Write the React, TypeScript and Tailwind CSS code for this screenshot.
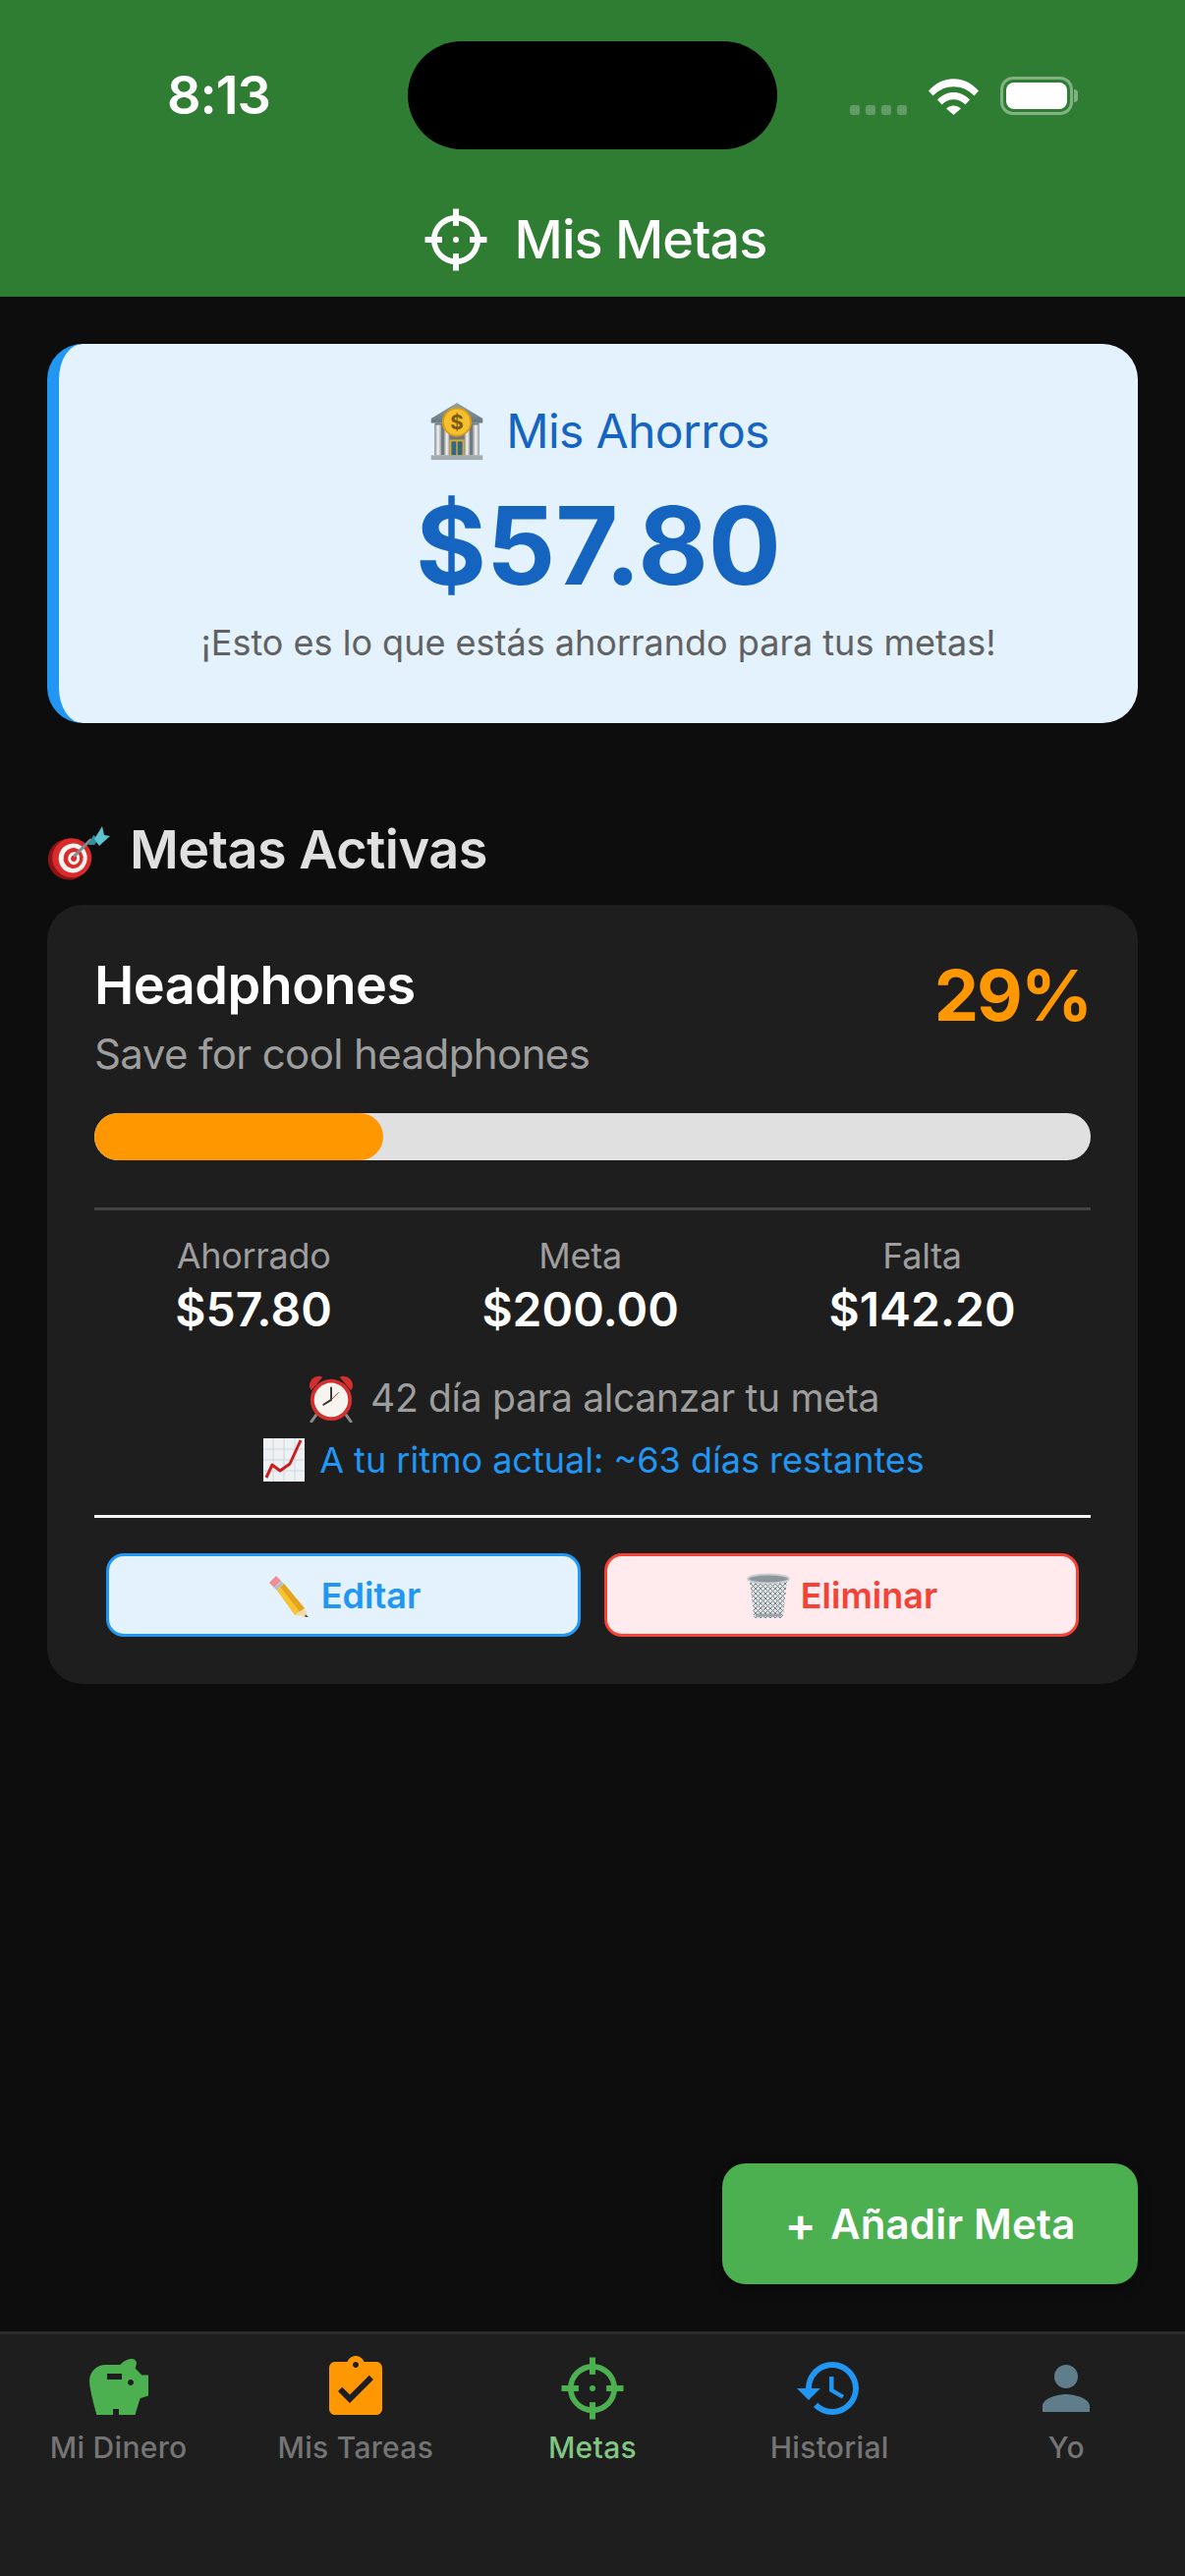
import React from "react";
import { MdSavings, MdAssignmentTurnedIn, MdHistory, MdPerson } from "react-icons/md";

const font = { fontFamily: "Inter, 'Liberation Sans', sans-serif" };

function Crosshair({ className }: { className: string }) {
  return (
    <svg viewBox="0 0 24 24" className={className} fill="currentColor">
      <circle cx="12" cy="12" r="7.4" fill="none" stroke="currentColor" strokeWidth="1.9" />
      <rect x="11" y="1.500" width="2" height="5.800" />
      <rect x="11" y="16.700" width="2" height="5.800" />
      <rect x="1.500" y="11" width="5.800" height="2" />
      <rect x="16.700" y="11" width="5.800" height="2" />
      <circle cx="12" cy="12" r="1" />
    </svg>
  );
}

function Bank() {
  return (
    <svg viewBox="0 0 64 64" className="w-[60px] h-[60px] shrink-0">
      <defs>
        <linearGradient id="roof" x1="0" y1="0" x2="0" y2="1"><stop offset="0" stopColor="#8fa3a8" /><stop offset="1" stopColor="#66787d" /></linearGradient>
        <linearGradient id="col" x1="0" y1="0" x2="1" y2="0"><stop offset="0" stopColor="#8d9396" /><stop offset=".5" stopColor="#f5f5f5" /><stop offset="1" stopColor="#9aa0a3" /></linearGradient>
      </defs>
      <path d="M32 1 60 18v5H4v-5z" fill="url(#roof)" />
      <rect x="8" y="23" width="48" height="35" fill="#6e7a80" />
      <rect x="8" y="25" width="7" height="33" fill="url(#col)" />
      <rect x="18" y="25" width="6" height="33" fill="url(#col)" />
      <rect x="40" y="25" width="6" height="33" fill="url(#col)" />
      <rect x="49" y="25" width="7" height="33" fill="url(#col)" />
      <rect x="25" y="42" width="14" height="17" fill="#2d6a8a" stroke="#e3a92a" strokeWidth="2" />
      <path d="M32 42v17" stroke="#e3a92a" strokeWidth="1.5" />
      <rect x="4" y="58" width="56" height="5" fill="#a5acae" />
      <circle cx="32" cy="22" r="15" fill="#f5c02c" stroke="#dd9a16" strokeWidth="2" />
      <text x="32" y="30" textAnchor="middle" fontSize="22" fontWeight="700" fill="#7a5a12" fontFamily="Inter">$</text>
    </svg>
  );
}

function Target() {
  return (
    <svg viewBox="0 0 64 56" className="w-[64px] h-[56px] shrink-0 mt-[5px]">
      <g transform="rotate(12 24 34)">
        <ellipse cx="22" cy="35" rx="21" ry="21" fill="#8d1414" />
        <ellipse cx="25" cy="33" rx="20" ry="20" fill="#d92b2b" />
        <ellipse cx="26" cy="33" rx="14.5" ry="15" fill="#f6f2f0" />
        <ellipse cx="26.500" cy="33" rx="10" ry="10.500" fill="#d92b2b" />
        <ellipse cx="27" cy="33" rx="6" ry="6.500" fill="#f6f2f0" />
        <ellipse cx="27" cy="33" rx="3" ry="3.200" fill="#d92b2b" />
      </g>
      <path d="M28 31 44 15" stroke="#7f8c8d" strokeWidth="3" strokeLinecap="round" />
      <path d="M42 20 47 10l6 4-5 6z" fill="#2f8f9d" />
      <path d="M48 14 56 1l2 9 6 1-11 10z" fill="#5cc3cf" />
    </svg>
  );
}

function Alarm() {
  return (
    <svg viewBox="0 0 52 52" className="w-[52px] h-[50px] shrink-0">
      <path d="M10 44 5 51M42 44l5 7" stroke="#8a8a8a" strokeWidth="3" strokeLinecap="round" />
      <path d="M3 14C3 6 9 2 15 3l2 1L5 18z" fill="#d32f2f" />
      <path d="M49 14c0-8-6-12-12-11l-2 1 12 14z" fill="#d32f2f" />
      <circle cx="26" cy="28" r="22" fill="#d32f2f" />
      <circle cx="26" cy="28" r="18" fill="#f7f4ef" />
      <path d="M26 15v13l-8 5" stroke="#333" strokeWidth="2" fill="none" strokeLinecap="round" />
      <path d="M26 28l8-8" stroke="#c62828" strokeWidth="1" />
    </svg>
  );
}

function Chart() {
  return (
    <svg viewBox="0 0 42 44" className="w-[42px] h-[44px] shrink-0">
      <rect x="0" y="0" width="42" height="44" fill="#eef1f4" />
      <path d="M0 11h42M0 22h42M0 33h42M10 0v44M21 0v44M32 0v44" stroke="#cdd6dd" strokeWidth="1" />
      <path d="M3 40 9 27l8 6L27 26 38 2" stroke="#c81e1e" strokeWidth="3" fill="none" strokeLinejoin="round" />
    </svg>
  );
}

function Pencil() {
  return (
    <svg viewBox="0 0 46 46" className="w-[46px] h-[46px] shrink-0">
      <path d="M3 10 10 3l5 5-7 7z" fill="#ef8e93" />
      <path d="M8 15l7-7 3 3-7 7z" fill="#b9bfc4" />
      <path d="M11 18l7-7 21 25-10 7z" fill="#f6c431" />
      <path d="M14.500 14.500l3.500-3.500 21 25-5 3.500z" fill="#e5a41f" />
      <path d="M29 43l10-7 4 9z" fill="#f0d9ae" />
      <path d="M40 42.500l3 2.500-4-.5z" fill="#333" />
    </svg>
  );
}

function Trash() {
  const lines = [];
  for (let i = -30; i < 60; i += 5) {
    lines.push(<path key={"a" + i} d={`M${i} 6l40 40`} />);
    lines.push(<path key={"b" + i} d={`M${i} 46l40-40`} />);
  }
  return (
    <svg viewBox="0 0 46 46" className="w-[46px] h-[46px] shrink-0">
      <clipPath id="bin"><path d="M4 7h38l-4 36a3 3 0 0 1-3 3H11a3 3 0 0 1-3-3z" /></clipPath>
      <path d="M4 7h38l-4 36a3 3 0 0 1-3 3H11a3 3 0 0 1-3-3z" fill="#dfe4e6" />
      <g clipPath="url(#bin)" stroke="#7d878c" strokeWidth="1">{lines}</g>
      <path d="M10 43h26" stroke="#9aa3a8" strokeWidth="3" />
      <ellipse cx="23" cy="6" rx="21" ry="4.500" fill="#8c969b" stroke="#c9cfd2" strokeWidth="2" />
    </svg>
  );
}

function Wifi() {
  return (
    <svg viewBox="0 0 51 37" className="w-[51px] h-[37px]">
      <path d="M0 12.500C14-4 37-4 51 12.500l-4.500 5C35 5 16 5 4.500 17.500z" fill="#fff" />
      <path d="M9 21.500c9.500-10 23.500-10 33 0l-4.500 5c-7-7-17-7-24 0z" fill="#fff" />
      <path d="M18 30.500c4.500-4 10.500-4 15 0L25.500 37z" fill="#fff" />
    </svg>
  );
}

function StatusBar() {
  return (
    <div className="flex items-start pt-[42px] h-[152px]">
      <div className="w-[415px] h-[110px] pl-[170px] flex items-center">
        <span className="text-[54px] font-semibold text-white leading-none tracking-[-1px]">8:13</span>
      </div>
      <div className="w-[376px] h-[110px] rounded-[55px] bg-black" />
      <div className="flex items-end h-[75px] pl-[74px]">
        <div className="flex gap-[6px]">
          <span className="w-[10px] h-[10px] rounded-[3px] bg-white/25" />
          <span className="w-[10px] h-[10px] rounded-[3px] bg-white/25" />
          <span className="w-[10px] h-[10px] rounded-[3px] bg-white/25" />
          <span className="w-[10px] h-[10px] rounded-[3px] bg-white/25" />
        </div>
        <div className="ml-[22px]"><Wifi /></div>
        <div className="ml-[22px] flex items-center">
          <div className="w-[74px] h-[39px] rounded-[13px] border-[3px] border-white/40 p-[3px]">
            <div className="w-full h-full rounded-[8px] bg-white" />
          </div>
          <div className="w-[4px] h-[13px] rounded-r-[4px] bg-white/40 ml-[1px]" />
        </div>
      </div>
    </div>
  );
}

function Stat({ label, value }: { label: string; value: string }) {
  return (
    <div className="flex flex-col items-center">
      <span className="text-[36px] leading-[51px] tracking-[-0.3px] text-[#9e9e9e]">{label}</span>
      <span className="text-[48px] leading-[58px] font-semibold text-white">{value}</span>
    </div>
  );
}

function Tab({ icon, label, active }: { icon: React.ReactNode; label: string; active?: boolean }) {
  return (
    <div className="w-[241.2px] flex flex-col items-center">
      {icon}
      <span className={`text-[30px] leading-[40px] mt-[4px] font-medium tracking-[0.3px] ${active ? "text-[#81c784]" : "text-[#757575]"}`}>{label}</span>
    </div>
  );
}

export default function App() {
  return (
    <div className="w-[1206px] h-[2622px] flex flex-col bg-[#0d0d0d] overflow-hidden" style={font}>
      <header className="h-[302px] shrink-0 bg-[#2e7d32]">
        <StatusBar />
        <div className="flex items-center justify-center gap-[24px] mt-[56px] pl-[2px]">
          <Crosshair className="w-[72px] h-[72px] text-white" />
          <span className="text-[54px] leading-[66px] font-medium tracking-[-1px] text-white">Mis Metas</span>
        </div>
      </header>

      <main className="flex-1 flex flex-col px-[48px] pt-[48px] pb-[48px]">
        <section className="h-[386px] rounded-[36px] border-l-[12px] border-[#2196f3] bg-[#e3f2fd] flex flex-col items-center pt-[57px]">
          <div className="flex items-center gap-[20px] h-[64px]">
            <Bank />
            <span className="text-[48px] text-[#1565c0] leading-none tracking-[-0.6px]">Mis Ahorros</span>
          </div>
          <div className="text-[110px] leading-[130px] font-bold text-[#1565c0] mt-[19px]">$57.80</div>
          <div className="text-[36px] leading-[44px] text-[#616161] mt-[12px]">¡Esto es lo que estás ahorrando para tus metas!</div>
        </section>

        <h2 className="flex items-center gap-[20px] mt-[100px] h-[58px] text-[54px] font-semibold tracking-[-0.5px] text-[#e0e0e0] leading-none">
          <Target />
          <span>Metas Activas</span>
        </h2>

        <section className="mt-[27px] h-[793px] rounded-[36px] bg-[#1e1e1e] p-[48px] pt-[50px]">
          <div className="flex justify-between">
            <div>
              <div className="text-[54px] leading-[64px] font-semibold tracking-[-0.5px] text-white">Headphones</div>
              <div className="text-[42px] leading-[52px] mt-[12px] tracking-[-0.6px] text-[#9e9e9e]">Save for cool headphones</div>
            </div>
            <div className="text-[72px] leading-[84px] font-bold tracking-[-2px] text-[#ff9800]">29%</div>
          </div>
          <div className="h-[48px] mt-[34px] rounded-[24px] bg-[#e0e0e0] overflow-hidden">
            <div className="h-full rounded-[24px] bg-[#ff9800]" style={{ width: "29%" }} />
          </div>
          <div className="h-[3px] mt-[48px] bg-[#424242]" />
          <div className="flex justify-around pl-[6px] mt-[21px]">
            <Stat label="Ahorrado" value="$57.80" />
            <Stat label="Meta" value="$200.00" />
            <Stat label="Falta" value="$142.20" />
          </div>
          <div className="flex items-center justify-center gap-[14px] mt-[36px] h-[50px] text-[39px] tracking-[-0.3px] text-[#9e9e9e]">
            <Alarm />
            <span>42 día para alcanzar tu meta</span>
          </div>
          <div className="flex items-center justify-center gap-[15px] pl-[3px] mt-[16px] h-[44px] text-[36px] text-[#2196f3]">
            <Chart />
            <span>A tu ritmo actual: ~63 días restantes</span>
          </div>
          <div className="h-[3px] mt-[34px] bg-[#f5f5f5]" />
          <div className="flex gap-[24px] px-[12px] mt-[36px]">
            <button className="flex-1 h-[85px] rounded-[18px] border-[3px] border-[#2196f3] bg-[#e3f2fd] flex items-center justify-center gap-[10px] text-[36px] font-semibold text-[#2196f3]">
              <Pencil />
              <span>Editar</span>
            </button>
            <button className="flex-1 h-[85px] rounded-[18px] border-[3px] border-[#f44336] bg-[#ffebee] flex items-center justify-center gap-[10px] text-[36px] font-semibold text-[#f44336]">
              <Trash />
              <span>Eliminar</span>
            </button>
          </div>
        </section>

        <button className="mt-auto self-end w-[423px] h-[123px] rounded-[24px] bg-[#4caf50] flex items-center justify-center gap-[14px] text-[42px] font-semibold tracking-[0.2px] text-white shadow-[0_6px_12px_rgba(0,0,0,0.3)]">
          <span className="text-[48px] leading-none">+</span>
          <span>Añadir Meta</span>
        </button>
      </main>

      <footer className="h-[249px] shrink-0 border-t-[3px] border-[#2c2c2c] bg-[#1e1e1e] flex pt-[19px]">
        <Tab icon={<MdSavings className="w-[72px] h-[72px] text-[#4caf50]" />} label="Mi Dinero" />
        <Tab icon={<MdAssignmentTurnedIn className="w-[72px] h-[72px] text-[#ff9800]" />} label="Mis Tareas" />
        <Tab icon={<Crosshair className="w-[72px] h-[72px] text-[#4caf50]" />} label="Metas" active />
        <Tab icon={<MdHistory className="w-[72px] h-[72px] text-[#2196f3]" />} label="Historial" />
        <Tab icon={<MdPerson className="w-[72px] h-[72px] text-[#607d8b]" />} label="Yo" />
      </footer>
    </div>
  );
}
